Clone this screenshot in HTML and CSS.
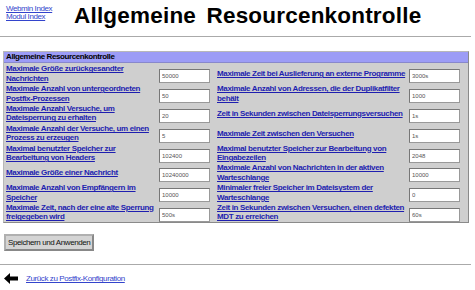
FILE: index.html
```html
<!DOCTYPE html>
<html lang="de">
<head>
    <meta charset="UTF-8">
    <title>Allgemeine Resourcenkontrolle</title>
    <link rel="stylesheet" href="styles.css">
</head>
<body>
    <div class="header">
        <div class="index-links">
            <a href="#">Webmin Index</a>
            <a href="#">Modul Index</a>
        </div>
        <h1>Allgemeine Resourcenkontrolle</h1>
    </div>
    <hr>

    <form class="config-form">
        <div class="config-table">
            <div class="table-head">Allgemeine Resourcenkontrolle</div>
            <div class="table-body">
                <a href="#" class="opt">Maximale Größe zurückgesandter Nachrichten</a>
                <div class="cell"><input type="text" value="50000"></div>
                <a href="#" class="opt">Maximale Zeit bei Auslieferung an externe Programme</a>
                <div class="cell"><input type="text" value="3000s"></div>

                <a href="#" class="opt">Maximale Anzahl von untergeordneten Postfix-Prozessen</a>
                <div class="cell"><input type="text" value="50"></div>
                <a href="#" class="opt">Maximale Anzahl von Adressen, die der Duplikatfilter behält</a>
                <div class="cell"><input type="text" value="1000"></div>

                <a href="#" class="opt">Maximale Anzahl Versuche, um Dateisperrung zu erhalten</a>
                <div class="cell"><input type="text" value="20"></div>
                <a href="#" class="opt">Zeit in Sekunden zwischen Dateisperrungsversuchen</a>
                <div class="cell"><input type="text" value="1s"></div>

                <a href="#" class="opt">Maximale Anzahl der Versuche, um einen Prozess zu erzeugen</a>
                <div class="cell"><input type="text" value="5"></div>
                <a href="#" class="opt">Maximale Zeit zwischen den Versuchen</a>
                <div class="cell"><input type="text" value="1s"></div>

                <a href="#" class="opt">Maximal benutzter Speicher zur Bearbeitung von Headers</a>
                <div class="cell"><input type="text" value="102400"></div>
                <a href="#" class="opt">Maximal benutzter Speicher zur Bearbeitung von Eingabezeilen</a>
                <div class="cell"><input type="text" value="2048"></div>

                <a href="#" class="opt">Maximale Größe einer Nachricht</a>
                <div class="cell"><input type="text" value="10240000"></div>
                <a href="#" class="opt">Maximale Anzahl von Nachrichten in der aktiven Warteschlange</a>
                <div class="cell"><input type="text" value="10000"></div>

                <a href="#" class="opt">Maximale Anzahl von Empfängern im Speicher</a>
                <div class="cell"><input type="text" value="10000"></div>
                <a href="#" class="opt">Minimaler freier Speicher im Dateisystem der Warteschlange</a>
                <div class="cell"><input type="text" value="0"></div>

                <a href="#" class="opt">Maximale Zeit, nach der eine alte Sperrung freigegeben wird</a>
                <div class="cell"><input type="text" value="500s"></div>
                <a href="#" class="opt">Zeit in Sekunden zwischen Versuchen, einen defekten MDT zu erreichen</a>
                <div class="cell"><input type="text" value="60s"></div>
            </div>
        </div>
        <button type="submit">Speichern und Anwenden</button>
    </form>
    <hr>

    <div class="footer">
        <svg class="back-arrow" width="14" height="11" viewBox="0 0 14 11">
            <path d="M0 5.5 L6 0 L6 3.5 L14 3.5 L14 7.5 L6 7.5 L6 11 Z" fill="#000"/>
        </svg>
        <a href="#">Zurück zu Postfix-Konfiguration</a>
    </div>
</body>
</html>
```
FILE: styles.css
```css
body {
    margin: 0;
    font-family: "Liberation Sans", Arial, sans-serif;
    background-color: #fff;
    color: #000;
}
a {
    color: #1e1eb0;
}
.header {
    display: flex;
    align-items: flex-start;
    height: 36px;
}
.index-links {
    display: flex;
    flex-direction: column;
    padding: 5px 0 0 6px;
    width: 68px;
    font-size: 8px;
    line-height: 8px;
    letter-spacing: -0.4px;
}
.index-links a {
    color: #3344cc;
}
h1 {
    margin: 3px 0 0 0;
    font-size: 22.5px;
    font-weight: bold;
    letter-spacing: 0.2px;
    word-spacing: 4px;
}
hr {
    margin: 0 4px 0 0;
    border: none;
    border-top: 1px solid #aaa;
    height: 0;
}
.config-form {
    padding: 14px 0 0 3px;
}
.config-table {
    width: 464px;
    border: 1px solid #b8b8b8;
    border-right-color: #8a8a8a;
    border-bottom-color: #8a8a8a;
}
.table-head {
    background-color: #9c9cf6;
    font-size: 8px;
    font-weight: bold;
    letter-spacing: -0.4px;
    line-height: 10px;
    padding: 0 2px;
    border-bottom: 1px solid #8888cc;
}
.table-body {
    display: grid;
    grid-template-columns: 153px 58px 192px 1fr;
    grid-auto-rows: 19.8px;
    align-items: center;
    background-color: #cfcfcf;
    padding: 1px 0 0 2px;
}
.opt {
    font-size: 8px;
    font-weight: bold;
    letter-spacing: -0.35px;
    line-height: 9.5px;
    padding-right: 2px;
}
.cell input {
    width: 51px;
    height: 14px;
    box-sizing: border-box;
    border: 1px solid #999;
    border-top-color: #777;
    border-left-color: #777;
    background: #fff;
    font-family: "Liberation Sans", Arial, sans-serif;
    font-size: 6px;
    color: #555;
    padding: 0 2px;
}
button {
    margin: 11px 0 13px 1px;
    padding: 0 2px;
    height: 17px;
    background-color: #d4d4d4;
    border: 2px solid #b0b0b0;
    border-right-color: #888;
    border-bottom-color: #888;
    font-family: "Liberation Sans", Arial, sans-serif;
    font-size: 8px;
    letter-spacing: -0.4px;
    color: #111;
}
.footer {
    display: flex;
    align-items: center;
    padding: 8px 0 0 4px;
    font-size: 8px;
    letter-spacing: -0.4px;
}
.back-arrow {
    margin-right: 8px;
}
.footer a {
    color: #3344cc;
}
```
